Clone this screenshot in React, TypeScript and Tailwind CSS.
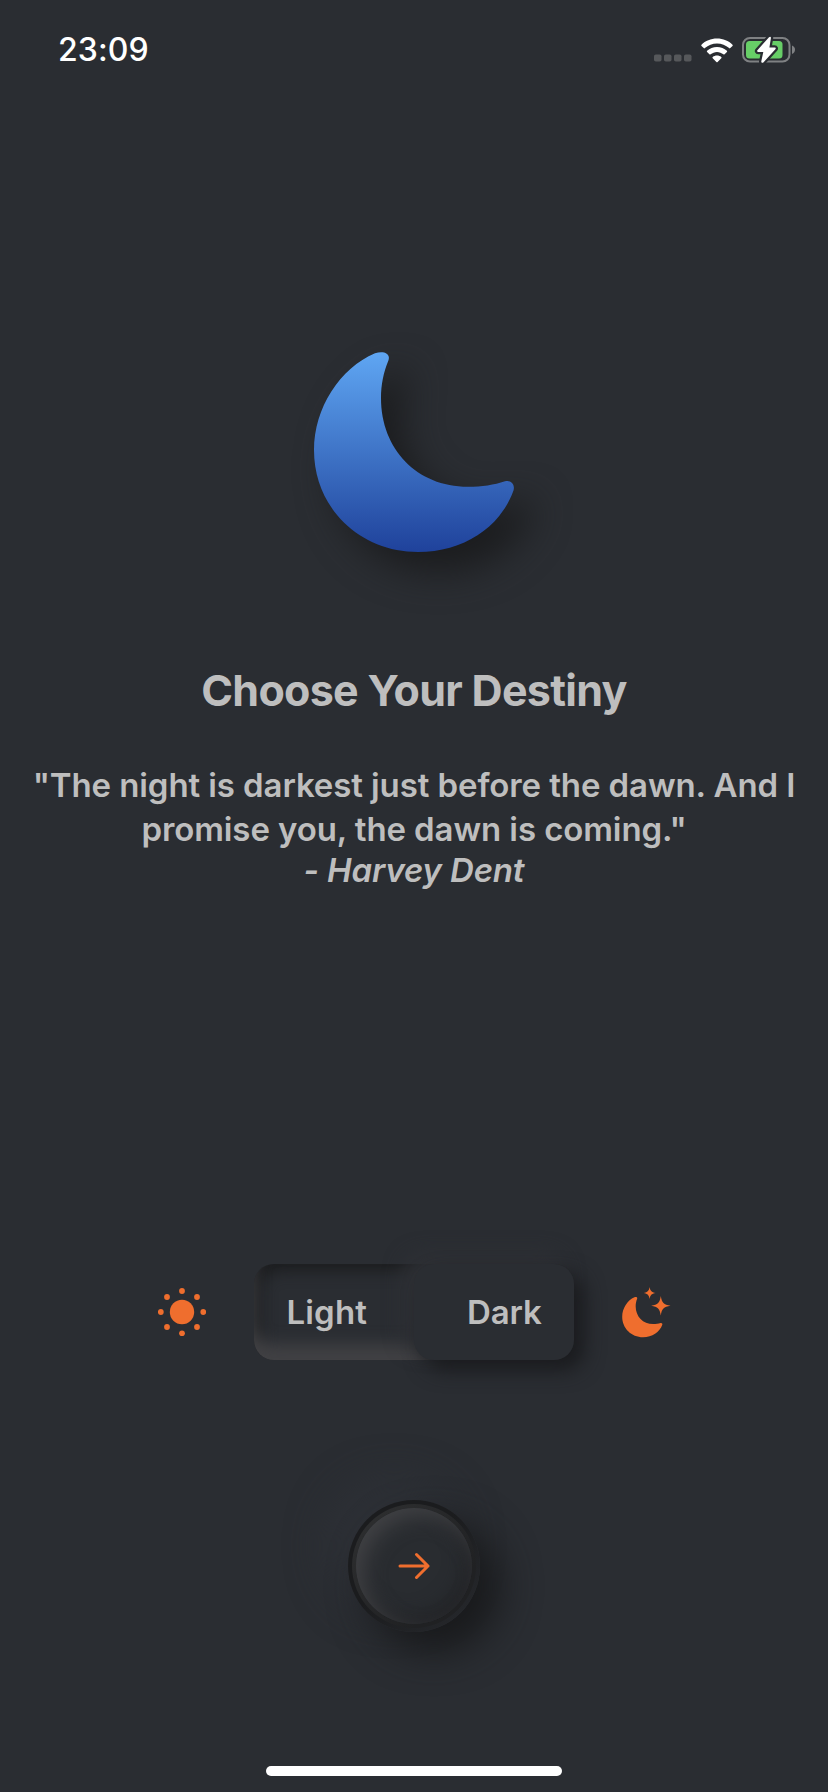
import { useId } from "react";

const MOON =
  "M61 1.2C69 -1.5 77 1 74.4 8.4C69.500 20 67 33 67 46C67 97 103 134.800 154 134.800C168 134.800 180 133 191 129.300C197 127.600 201.300 132.500 199.500 138.500C186 176 149 200 104 200C46 200 0 156 0 98C0 56 26 16 61 1.2Z";

function StatusBar() {
  return (
    <header className="flex h-[98px] shrink-0 items-start justify-between pl-[58px] pr-[32px] pt-[30px] text-white">
      <time className="text-[32px] font-medium leading-[40px] tracking-[0.1px]">23:09</time>
      <div className="flex items-center pt-[6px]">
        <svg width="38" height="26" viewBox="0 0 38 26" className="mr-[9px]" fill="#56585b">
          <rect x="0" y="17.500" width="7.500" height="7" rx="1.800" />
          <rect x="10" y="17.500" width="7.500" height="7" rx="1.800" />
          <rect x="20" y="17.500" width="7.500" height="7" rx="1.800" />
          <rect x="30" y="17.500" width="7.500" height="7" rx="1.800" />
        </svg>
        <svg width="32" height="25" viewBox="0 0 32 25" className="mr-[9px]" fill="white">
          <path d="M16 0.500C22.200 0.500 27.600 2.800 31.500 6.700C31.900 7.100 31.900 7.500 31.500 7.900L29.300 10.100C28.900 10.500 28.500 10.500 28.100 10.100C24.800 7.100 20.600 5.400 16 5.400C11.400 5.400 7.200 7.100 3.900 10.100C3.500 10.500 3.100 10.500 2.700 10.100L0.500 7.900C0.100 7.500 0.100 7.100 0.500 6.700C4.400 2.800 9.800 0.500 16 0.500Z" />
          <path d="M16 9C19.800 9 23.300 10.400 25.900 12.800C26.300 13.200 26.300 13.600 25.900 14L23.600 16.200C23.200 16.600 22.800 16.600 22.400 16.300C20.600 14.800 18.400 13.900 16 13.900C13.600 13.900 11.400 14.800 9.600 16.300C9.200 16.600 8.800 16.600 8.400 16.200L6.100 14C5.700 13.600 5.700 13.200 6.100 12.800C8.700 10.400 12.200 9 16 9Z" />
          <path d="M16 17.600C17.600 17.600 19.100 18.100 20.300 19.100C20.700 19.400 20.700 19.900 20.300 20.300L16.600 24C16.200 24.400 15.800 24.400 15.400 24L11.700 20.300C11.300 19.900 11.300 19.400 11.700 19.100C12.900 18.100 14.400 17.600 16 17.600Z" />
        </svg>
        <svg width="54" height="28" viewBox="0 0 54 28">
          <rect x="1" y="2" width="46.500" height="23.500" rx="7" fill="none" stroke="#7f8183" strokeWidth="2" />
          <rect x="4" y="5" width="36.500" height="17.500" rx="3.500" fill="#67ce67" />
          <path d="M50 9.500C52 10.200 53 11.800 53 13.700C53 15.600 52 17.200 50 18Z" fill="#7f8183" />
          <path
            d="M27 1.300L15.400 14.200C14.700 15 15.100 16 16.100 16H21.300L19.300 25.200C19 26.900 20.600 27.300 21.600 26.200L33.400 13.200C34.100 12.400 33.700 11.400 32.700 11.400H27.400L28.900 2.300C29.200 0.700 28 0.300 27 1.300Z"
            fill="white"
            stroke="#2a2d32"
            strokeWidth="4.500"
            paintOrder="stroke"
          />
        </svg>
      </div>
    </header>
  );
}

function BlueMoon() {
  const gradient = useId();
  return (
    <svg
      width="200"
      height="200"
      viewBox="0 0 200 200"
      className="overflow-visible [filter:drop-shadow(20px_20px_18px_#1b1c1e)]"
    >
      <defs>
        <linearGradient id={gradient} x1="0" y1="0" x2="0" y2="1">
          <stop offset="0" stopColor="#5fa6f3" />
          <stop offset="1" stopColor="#1f429b" />
        </linearGradient>
      </defs>
      <path d={MOON} fill={`url(#${gradient})`} />
    </svg>
  );
}

function SunIcon() {
  const rays = [
    [24, 3], [39, 9], [45.300, 24], [39, 39], [24, 45.300], [9, 39], [2.800, 24], [9, 9],
  ];
  return (
    <svg width="48" height="48" viewBox="0 0 48 48" fill="#ef6e2e">
      <circle cx="24" cy="24" r="12.200" />
      {rays.map(([x, y]) => (
        <circle key={`${x}-${y}`} cx={x} cy={y} r="2.900" />
      ))}
    </svg>
  );
}

function MoonStarsIcon() {
  return (
    <svg width="49" height="51" viewBox="0 0 49 51" fill="#ef6e2e">
      <path transform="translate(0.200 10) scale(0.201)" d={MOON} />
      <path d="M27.600 0C28.200 3.800 29.500 5.200 33.600 6C29.500 6.800 28.200 8.200 27.600 12C27 8.200 25.700 6.800 21.600 6C25.700 5.200 27 3.800 27.600 0Z" />
      <path d="M38.800 9C39.800 15.900 41.700 17.800 48.500 18.800C41.700 19.800 39.800 21.700 38.800 28.600C37.800 21.700 35.900 19.800 29.200 18.800C35.900 17.800 37.800 15.900 38.800 9Z" />
    </svg>
  );
}

export default function App() {
  return (
    <main className="flex h-[1792px] w-[828px] flex-col items-stretch overflow-hidden bg-[#2a2d32] font-[Inter,sans-serif] text-[#bebebe]">
      <StatusBar />
      <section className="flex flex-col items-center pt-[254px] text-center">
        <BlueMoon />
        <h1 className="mt-[112px] text-[43px] font-bold leading-[52px] tracking-[-0.7px]">Choose Your Destiny</h1>
        <p className="mt-[47px] whitespace-nowrap text-[33px] font-[560] leading-[44px] tracking-[-0.1px]">
          "The night is darkest just before the dawn. And I
          <br />
          promise you, the dawn is coming."
        </p>
        <p className="mt-[-1px] text-[33px] font-[580] italic leading-[40px] tracking-[-0.15px]">- Harvey Dent</p>
      </section>

      <section className="mt-[374px] flex h-[96px] items-center justify-center">
        <SunIcon />
        <div className="ml-[48px] mr-[48px] flex h-[96px] w-[320px] rounded-[20px] shadow-[inset_0_-16px_16px_#414144,inset_6px_6px_16px_#1b1c1e]">
          <button className="w-[160px] pl-[33px] pt-[2px] text-left text-[33px] font-[560] tracking-[0.15px]">Light</button>
          <button className="w-[160px] rounded-[20px] bg-[#2a2d32] pr-[32px] pt-[2px] text-right text-[33px] font-[560] tracking-[-0.2px] shadow-[10px_10px_20px_#1a1b1e,-10px_-10px_20px_#2f3136]">
            Dark
          </button>
        </div>
        <MoonStarsIcon />
      </section>

      <div className="mt-[140px] flex justify-center">
        <button
          aria-label="Continue"
          className="flex size-[132px] items-center justify-center rounded-full bg-[linear-gradient(135deg,#1b1c1e_45%,#25272b_90%)] shadow-[20px_20px_38px_#191a1c,-20px_-20px_40px_#2e3137]"
        >
          <span className="flex size-[124px] items-center justify-center rounded-full bg-[linear-gradient(135deg,#2f3031,#202123_75%)]">
            <span className="flex size-[116px] items-center justify-center rounded-full bg-[#292c30] shadow-[inset_8px_8px_20px_#404144,inset_-6px_-6px_20px_#212225]">
              <svg width="32" height="28" viewBox="0 0 32 28" fill="none" stroke="#ef6e2e" strokeWidth="3" strokeLinecap="round" strokeLinejoin="round">
                <path d="M2 14H30M18.500 2.500L30 14L18.500 25.500" />
              </svg>
            </span>
          </span>
        </button>
      </div>
      <footer className="mt-auto flex justify-center pb-[16px]">
        <div className="h-[10px] w-[296px] rounded-full bg-white" />
      </footer>
    </main>
  );
}
